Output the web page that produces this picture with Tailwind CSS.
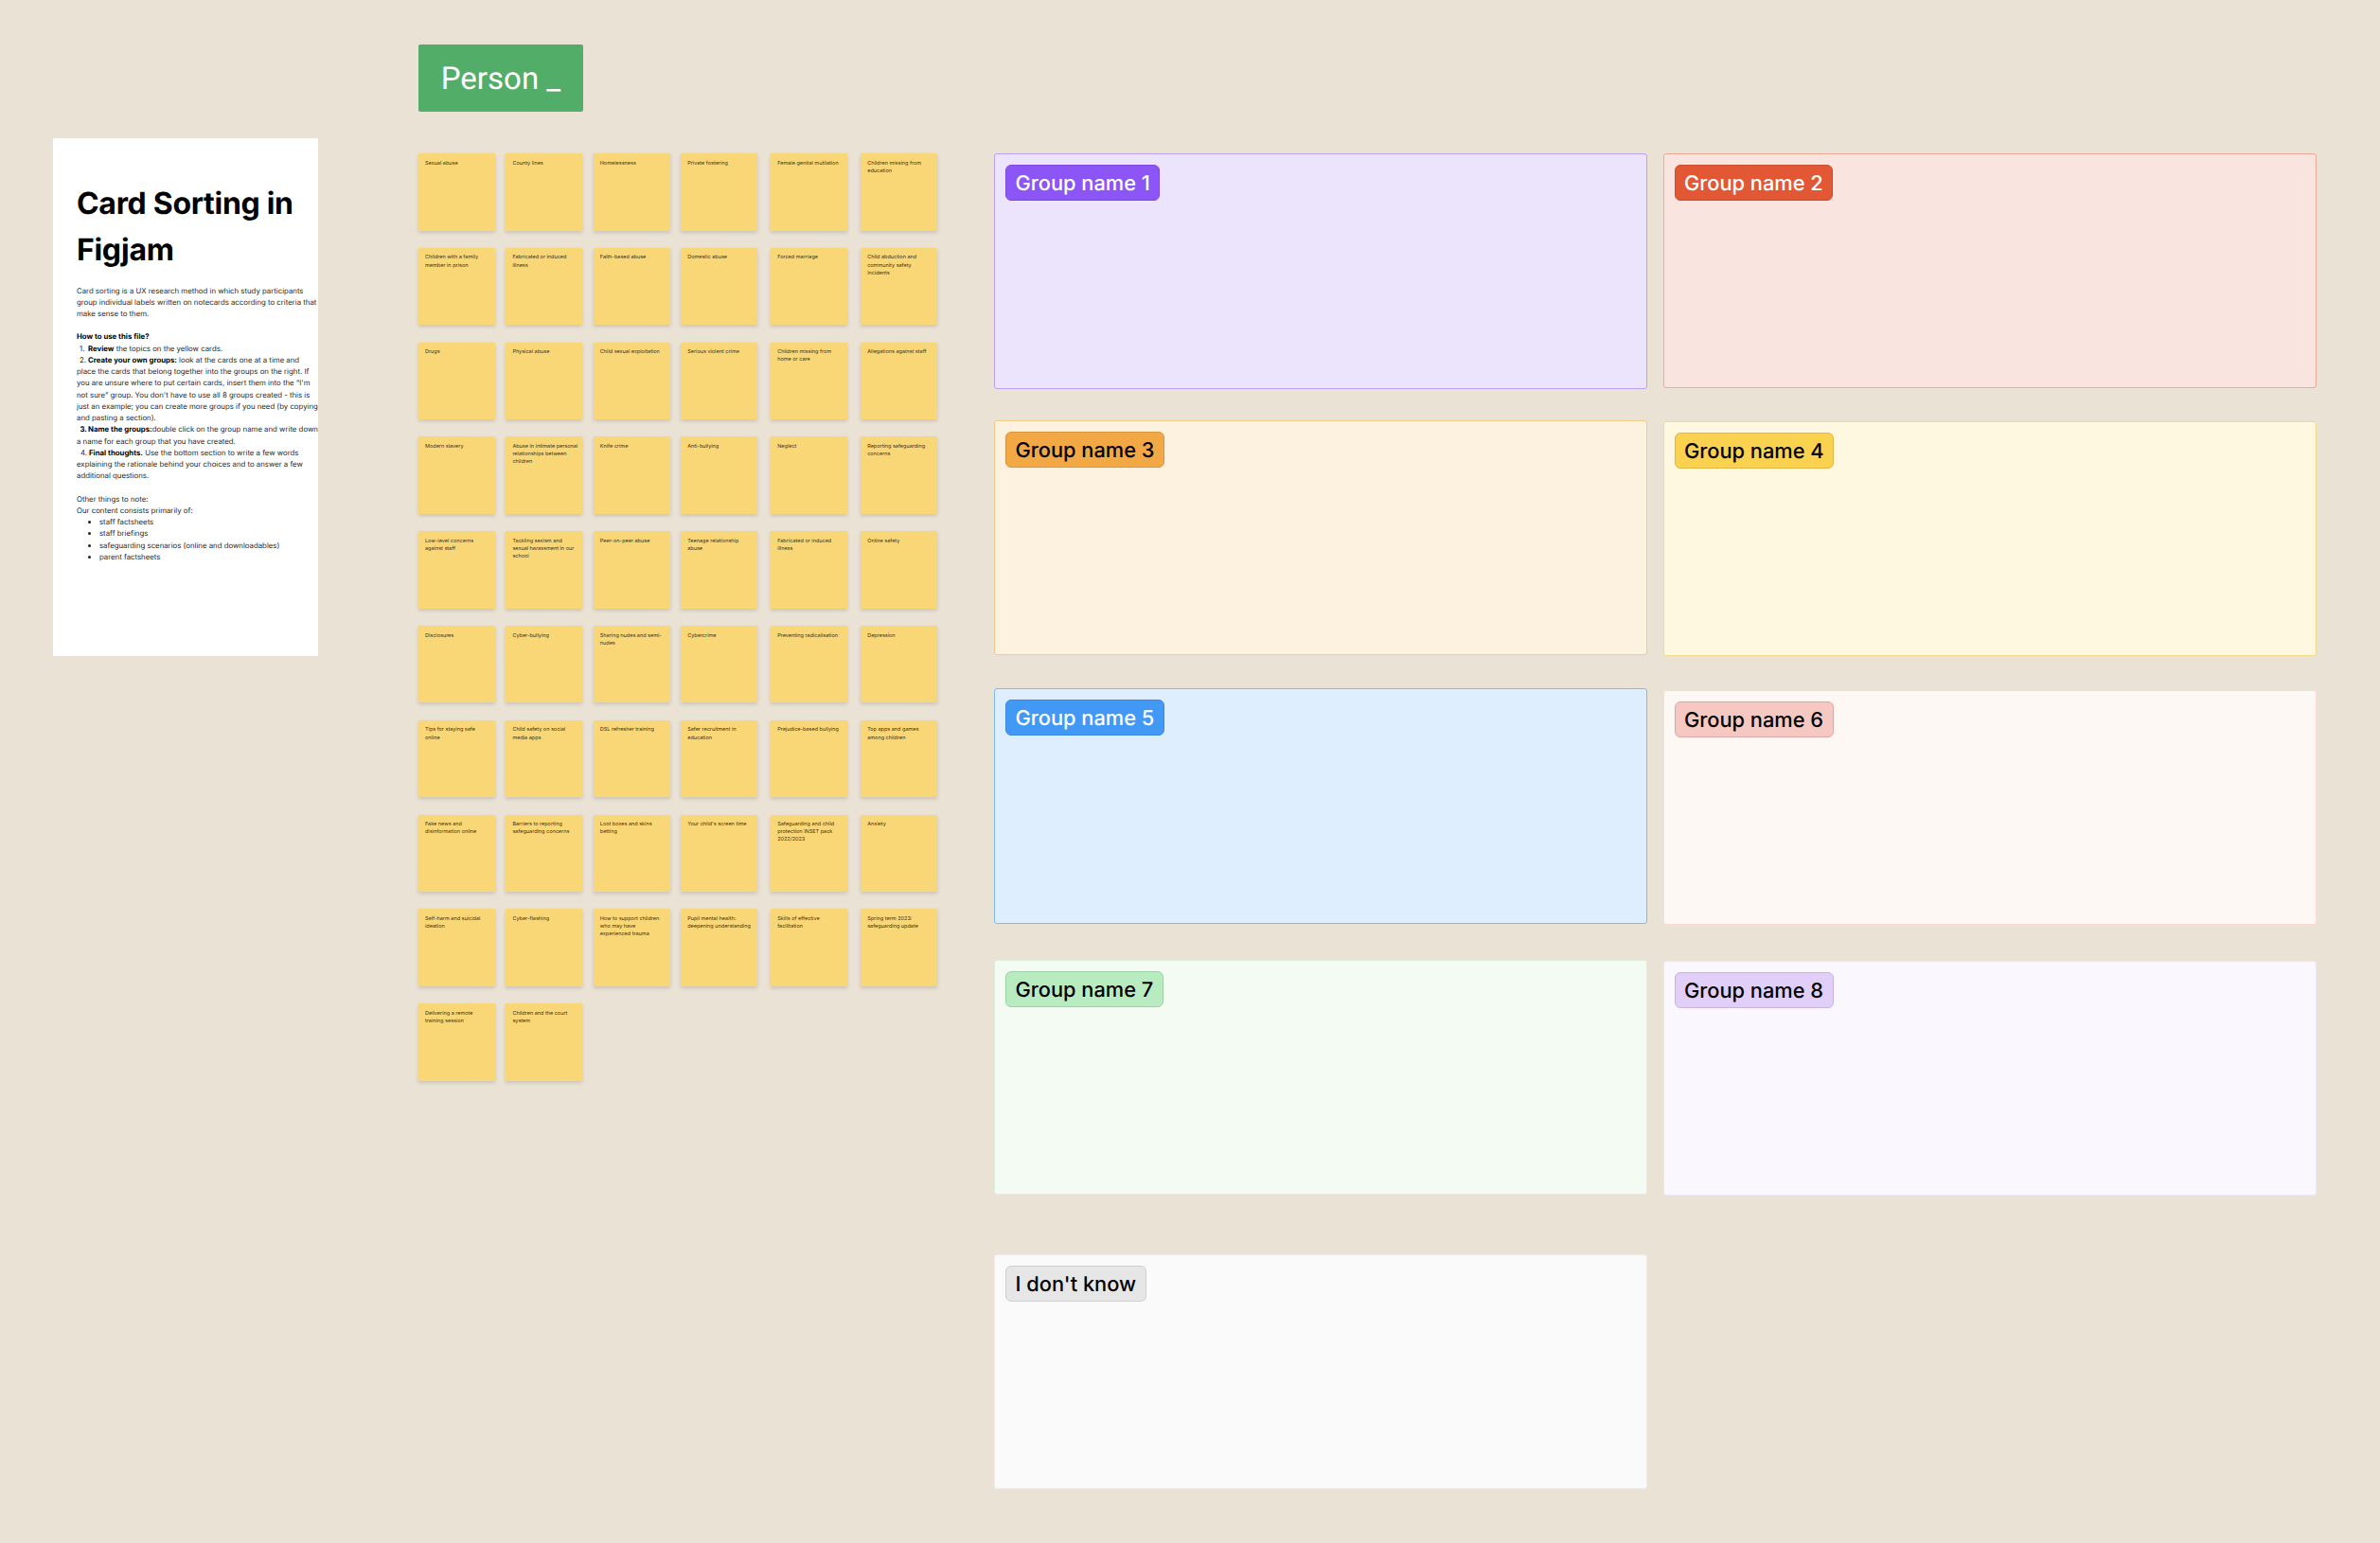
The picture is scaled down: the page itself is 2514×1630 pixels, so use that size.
<!DOCTYPE html>
<html lang="en">
<head>
  <meta charset="UTF-8">
  <title>Card Sorting in Figjam</title>
  <script src="https://cdn.jsdelivr.net/npm/@tailwindcss/browser@4"></script>
</head>
<body class="bg-[#ebe2d6] font-['Inter',sans-serif] [text-rendering:geometricPrecision]">
  <div class="w-[2514px] h-[1630px] overflow-hidden flex items-start">

    <!-- Intro -->
    <section class="ml-[56px] mt-[146px] w-[280px] h-[547px] shrink-0 bg-white pl-[25px] pt-[43.5px] text-black">
      <h1 class="text-[32px] leading-[49px] font-bold tracking-[-0.3px]">Card Sorting in<br>Figjam</h1>
      <div class="mt-[13px] text-[7.8px] leading-[12.23px] whitespace-nowrap text-[#1f1f1f] [&_b]:text-black">
        <p>Card sorting is a UX research method in which study participants<br>group individual labels written on notecards according to criteria that<br>make sense to them.</p>
        <p class="mt-[12.23px] font-bold text-black">How to use this file?</p>
        <p><span class="inline-block w-[12px] pl-[3px]">1.</span><b>Review</b> the topics on the yellow cards.</p>
        <p><span class="inline-block w-[12px] pl-[3px]">2.</span><b>Create your own groups:</b> look at the cards one at a time and<br>place the cards that belong together into the groups on the right. If<br>you are unsure where to put certain cards, insert them into the “I'm<br>not sure” group. You don't have to use all 8 groups created - this is<br>just an example; you can create more groups if you need (by copying<br>and pasting a section).</p>
        <p><b class="inline-block w-[12px] pl-[3.5px]">3.</b><b>Name the groups:</b>double click on the group name and write down<br>a name for each group that you have created.</p>
        <p><span class="inline-block w-[13px] pl-[4px]">4.</span><b>Final thoughts.</b> Use the bottom section to write a few words<br>explaining the rationale behind your choices and to answer a few<br>additional questions.</p>
        <p class="mt-[12.23px]">Other things to note:</p>
        <p>Our content consists primarily of:</p>
        <ul class="list-disc pl-[24px]">
          <li>staff factsheets</li>
          <li>staff briefings</li>
          <li>safeguarding scenarios (online and downloadables)</li>
          <li>parent factsheets</li>
        </ul>
      </div>
    </section>

    <!-- Cards -->
    <section class="ml-[106px] mt-[47px] w-[552px] shrink-0">
      <div class="w-[174px] h-[71px] pt-[2px] rounded-[2px] bg-[#52ad69] text-white flex items-center justify-center font-['Roboto',sans-serif] text-[33px]">Person _</div>
      <div class="mt-[44px] grid grid-cols-[92.4px_92.4px_92.4px_95px_95px_82px] gap-y-[18.3px] text-[5.5px] leading-[8.15px] whitespace-nowrap text-[#3d3418] [&>div]:w-[81px] [&>div]:h-[81.5px] [&>div]:bg-[#fad776] [&>div]:pl-[7px] [&>div]:pt-[6.6px] [&>div]:shadow-[0_2px_4px_rgba(0,0,0,0.14)]">
        <div>Sexual abuse</div>
        <div>County lines</div>
        <div>Homelessness</div>
        <div>Private fostering</div>
        <div>Female genital mutilation</div>
        <div>Children missing from<br>education</div>

        <div>Children with a family<br>member in prison</div>
        <div>Fabricated or induced<br>illness</div>
        <div>Faith-based abuse</div>
        <div>Domestic abuse</div>
        <div>Forced marriage</div>
        <div>Child abduction and<br>community safety<br>incidents</div>

        <div>Drugs</div>
        <div>Physical abuse</div>
        <div>Child sexual exploitation</div>
        <div>Serious violent crime</div>
        <div>Children missing from<br>home or care</div>
        <div>Allegations against staff</div>

        <div>Modern slavery</div>
        <div>Abuse in intimate personal<br>relationships between<br>children</div>
        <div>Knife crime</div>
        <div>Anti-bullying</div>
        <div>Neglect</div>
        <div>Reporting safeguarding<br>concerns</div>

        <div>Low-level concerns<br>against staff</div>
        <div>Tackling sexism and<br>sexual harassment in our<br>school</div>
        <div>Peer-on-peer abuse</div>
        <div>Teenage relationship<br>abuse</div>
        <div>Fabricated or induced<br>illness</div>
        <div>Online safety</div>

        <div>Disclosures</div>
        <div>Cyber-bullying</div>
        <div>Sharing nudes and semi-<br>nudes</div>
        <div>Cybercrime</div>
        <div>Preventing radicalisation</div>
        <div>Depression</div>

        <div>Tips for staying safe<br>online</div>
        <div>Child safety on social<br>media apps</div>
        <div>DSL refresher training</div>
        <div>Safer recruitment in<br>education</div>
        <div>Prejudice-based bullying</div>
        <div>Top apps and games<br>among children</div>

        <div>Fake news and<br>disinformation online</div>
        <div>Barriers to reporting<br>safeguarding concerns</div>
        <div>Loot boxes and skins<br>betting</div>
        <div>Your child's screen time</div>
        <div>Safeguarding and child<br>protection INSET pack<br>2022/2023</div>
        <div>Anxiety</div>

        <div>Self-harm and suicidal<br>ideation</div>
        <div>Cyber-flashing</div>
        <div>How to support children<br>who may have<br>experienced trauma</div>
        <div>Pupil mental health:<br>deepening understanding</div>
        <div>Skills of effective<br>facilitation</div>
        <div>Spring term 2023:<br>safeguarding update</div>

        <div>Delivering a remote<br>training session</div>
        <div>Children and the court<br>system</div>
      </div>
    </section>

    <!-- Groups, left column -->
    <section class="ml-[56px] mt-[162px] w-[690px] shrink-0 text-[21.8px] leading-[26px] font-medium text-black [&>div]:h-[248.5px] [&>div]:rounded-[3px] [&>div]:border [&>div]:p-[11px]">
      <div class="bg-[#ece3fd] border-[#b9a0f0]">
        <span class="inline-block px-[9.5px] pt-[6px] pb-[4px] rounded-[6px] border bg-[#8c55f5] border-[#7d48e0] text-white">Group name 1</span>
      </div>
      <div class="mt-[33px] bg-[#fdf1e0] border-[#f4c98a]">
        <span class="inline-block px-[9.5px] pt-[6px] pb-[4px] rounded-[6px] border bg-[#f2a845] border-[#d9963c]">Group name 3</span>
      </div>
      <div class="mt-[35px] bg-[#deeeff] border-[#7fbaf5]">
        <span class="inline-block px-[9.5px] pt-[6px] pb-[4px] rounded-[6px] border bg-[#4299f5] border-[#3b8ae0] text-white">Group name 5</span>
      </div>
      <div class="mt-[38px] bg-[#f4fbf3] border-[#dcf0dc]">
        <span class="inline-block px-[9.5px] pt-[6px] pb-[4px] rounded-[6px] border bg-[#b8ebbf] border-[#9bd4a3]">Group name 7</span>
      </div>
      <div class="mt-[62.5px] bg-[#fafafa] border-[#ededed]">
        <span class="inline-block px-[9.5px] pt-[6px] pb-[4px] rounded-[6px] border bg-[#e6e6e6] border-[#cfcfcf]">I don't know</span>
      </div>
    </section>

    <!-- Groups, right column -->
    <section class="ml-[16.5px] mt-[162px] w-[690px] shrink-0 text-[21.8px] leading-[26px] font-medium text-black [&>div]:h-[248px] [&>div]:rounded-[3px] [&>div]:border [&>div]:p-[11px]">
      <div class="bg-[#fae4df] border-[#eda896]">
        <span class="inline-block px-[9.5px] pt-[6px] pb-[4px] rounded-[6px] border bg-[#e25734] border-[#c94d2e] text-white">Group name 2</span>
      </div>
      <div class="mt-[35px] bg-[#fef8e1] border-[#f7d98a]">
        <span class="inline-block px-[9.5px] pt-[6px] pb-[4px] rounded-[6px] border bg-[#fbd150] border-[#dfb746]">Group name 4</span>
      </div>
      <div class="mt-[36px] bg-[#fef8f5] border-[#fbdcd6]">
        <span class="inline-block px-[9.5px] pt-[6px] pb-[4px] rounded-[6px] border bg-[#f6c8c2] border-[#d9aaa5]">Group name 6</span>
      </div>
      <div class="mt-[38px] bg-[#faf7fe] border-[#ece5f8]">
        <span class="inline-block px-[9.5px] pt-[6px] pb-[4px] rounded-[6px] border bg-[#e1cffa] border-[#c6b4e3]">Group name 8</span>
      </div>
    </section>

  </div>
</body>
</html>
